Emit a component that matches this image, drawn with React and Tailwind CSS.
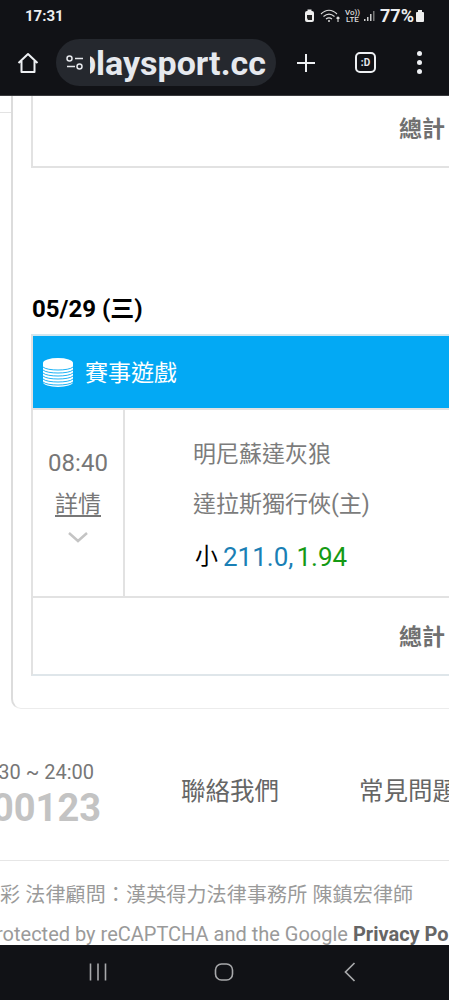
const F = { fontFamily: 'Roboto, "Noto Sans CJK TC", sans-serif' };

function Total() {
  return (
    <div className="flex justify-end items-center pr-[4px] text-[23px] font-bold text-[#707070] leading-none">
      總計
    </div>
  );
}

function Coins() {
  return (
    <svg width="32" height="32" viewBox="0 0 32 32" className="shrink-0">
      <ellipse cx="16" cy="7" rx="15" ry="5" fill="#fff" />
      <rect x="1" y="7" width="30" height="19" fill="#fff" />
      <ellipse cx="16" cy="26" rx="15" ry="5" fill="#fff" />
      {[12, 15, 18, 21, 24, 27].map((y) => (
        <path key={y} d={`M1 ${y - 1}C5 ${y + 3} 27 ${y + 3} 31 ${y - 1}`} fill="none" stroke="#03a9f4" strokeWidth="0.9" />
      ))}
    </svg>
  );
}

function StatusBar() {
  return (
    <div className="h-[32px] shrink-0 flex items-center justify-between pl-[25px] pr-[24px] text-[#eceef0]">
      <span className="text-[15px] font-bold leading-none">17:31</span>
      <div className="flex items-center gap-[3px]">
        <svg width="11" height="14" viewBox="0 0 11 14">
          <rect x="1" y="2" width="9" height="11" rx="2" fill="#eee" />
          <rect x="3.5" y="0.5" width="4" height="2" fill="#eee" />
          <path d="M3 6h5v5H4L3 9z" fill="#222" />
        </svg>
        <svg width="22" height="14" viewBox="0 0 22 14" fill="none" stroke="#ddd" strokeWidth="1.1" className="ml-[2px]">
          <path d="M1 5c5-5 11-5 16 0M3.5 7.5c3.5-3 7.500-3 11 0M6 10c2-1.500 4-1.500 6 0" />
          <path d="M18 13V8M16.500 9.500 18 8l1.500 1.500" />
          <circle cx="9" cy="12" r="1" fill="#ddd" stroke="none" />
        </svg>
        <div className="flex flex-col items-center text-[8px] leading-[7px] text-[#ddd] font-medium">
          <span>Vo))</span>
          <span>LTE</span>
        </div>
        <svg width="14" height="12" viewBox="0 0 14 12">
          <rect x="1" y="9" width="1.500" height="2" fill="#ccc" />
          <rect x="4" y="7" width="1.500" height="4" fill="#ccc" />
          <rect x="7" y="4" width="1.500" height="7" fill="#ccc" />
          <rect x="10" y="1" width="1.500" height="10" fill="#777" />
        </svg>
        <span className="text-[18px] font-bold leading-none">77%</span>
        <svg width="10" height="13" viewBox="0 0 10 13" className="-ml-[2px]">
          <rect x="3" y="0" width="4" height="2" fill="#eee" />
          <rect x="1" y="2" width="8" height="10" rx="1" fill="#eee" />
        </svg>
      </div>
    </div>
  );
}

function Toolbar() {
  return (
    <div className="h-[64px] shrink-0 flex items-center pb-[2px] border-b border-[#3a3b3e] text-[#e6e9ee]">
      <svg width="24" height="24" viewBox="0 0 24 24" fill="none" stroke="#eef0f3" strokeWidth="2" strokeLinejoin="round" className="ml-[16px] shrink-0">
        <path d="M2.500 12 12 3l9.500 9M5.500 10v11h13V10" />
      </svg>
      <div className="ml-[16px] w-[220px] h-[47px] rounded-full bg-[#25282e] flex items-center overflow-hidden shrink-0">
        <svg width="20" height="18" viewBox="0 0 20 18" fill="none" stroke="#e6e8ec" strokeWidth="1.500" className="ml-[9px] shrink-0">
          <circle cx="4.500" cy="4.500" r="2.500" />
          <path d="M10 4.500h8M2 12.500h8" />
          <circle cx="14.500" cy="12.500" r="2.500" />
        </svg>
        <div className="ml-[5px] w-[6px] h-[47px] overflow-hidden shrink-0 relative">
          <span className="absolute right-0 top-0 leading-[47px] text-[34px] font-bold whitespace-nowrap">p</span>
        </div>
        <span className="text-[34px] font-bold leading-none whitespace-nowrap pr-[6px]">laysport.cc</span>
      </div>
      <svg width="24" height="24" viewBox="0 0 24 24" fill="none" stroke="#eef0f3" strokeWidth="2" className="ml-[18px] shrink-0">
        <path d="M12 3v18M3 12h18" />
      </svg>
      <div className="ml-[37px] w-[21px] h-[21px] rounded-[5px] border-2 border-[#eef0f3] flex items-center justify-center text-[10px] font-bold leading-none shrink-0">
        :D
      </div>
      <div className="ml-[41px] flex flex-col gap-[4px] shrink-0">
        <span className="w-[5px] h-[5px] rounded-full bg-[#eef0f3]" />
        <span className="w-[5px] h-[5px] rounded-full bg-[#eef0f3]" />
        <span className="w-[5px] h-[5px] rounded-full bg-[#eef0f3]" />
      </div>
    </div>
  );
}

function Main() {
  return (
    <div className="flex-1 min-h-0 overflow-hidden bg-white relative">
      <div className="absolute left-0 top-[16px] w-[11px] h-px bg-[#e3e3e3]" />
      <div className="ml-[11px] w-[600px] h-[613px] border-l-2 border-b border-[#dcdcdc] border-b-[#ececec] rounded-bl-[10px] pl-[18px] flex flex-col">
        <div className="h-[72px] w-[582px] border-l-2 border-b-2 border-[#e2e2e2] flex flex-col justify-start pt-[22px] shrink-0">
          <div className="w-[416px]"><Total /></div>
        </div>
        <div className="mt-[127px] h-[28px] text-[24px] font-bold leading-[28px] text-black ml-[1px]">05/29 (三)</div>
        <div className="mt-[11px] w-[582px] border-2 border-r-0 border-[#dfe6ea] border-l-[#e2e2e2] border-t-[#cfe6f0]">
          <div className="h-[72px] bg-[#03a9f4] flex items-center pl-[9px] gap-[12px] text-white text-[23px] leading-none">
            <Coins />
            <span className="mt-[2px] -ml-[1px]">賽事遊戲</span>
          </div>
          <div className="flex h-[190px] border-t-2 border-b-2 border-[#e2e2e2]">
            <div className="w-[92px] shrink-0 border-r-2 border-[#e2e2e2] flex flex-col items-center pt-[39px] text-[#777]">
              <span className="text-[24px] leading-[28px]">08:40</span>
              <span className="mt-[15px] text-[23px] leading-[26px] underline underline-offset-[3px]">詳情</span>
              <svg width="22" height="14" viewBox="0 0 22 14" fill="none" stroke="#c4c4c4" strokeWidth="2.500" className="mt-[12px]">
                <path d="M2 3l9 8 9-8" />
              </svg>
            </div>
            <div className="pl-[68px] pt-[32px] text-[#7c7c7c] text-[23px] leading-[26px]">
              <div>明尼蘇達灰狼</div>
              <div className="mt-[24px]">達拉斯獨行俠(主)</div>
              <div className="mt-[24px] text-[26px] leading-[30px] flex items-center pl-[2px]">
                <span className="text-black text-[23px]">小</span>
                <span className="text-[#1a7fb5] ml-[5px]">211.0,</span>
                <span className="text-[#159a14] ml-[3px]">1.94</span>
              </div>
            </div>
          </div>
          <div className="h-[76px] pt-[28px] w-[416px]"><Total /></div>
        </div>
      </div>
      <div className="flex items-start h-[152px] border-b border-[#e6e6e6] w-[449px] shrink-0">
        <div className="w-[101px] shrink-0 flex flex-col mt-[51px] relative h-[70px]">
          <span className="absolute right-[7px] top-0 text-[20px] leading-[24px] text-[#777] whitespace-nowrap">30 ~ 24:00</span>
          <span className="absolute right-0 top-[26px] text-[38px] font-bold leading-[44px] text-[#c3c3c3] whitespace-nowrap">00123</span>
        </div>
        <span className="ml-[80px] mt-[67px] text-[24.500px] leading-[32px] text-[#666] whitespace-nowrap">聯絡我們</span>
        <span className="ml-[80px] mt-[67px] text-[24.500px] leading-[32px] text-[#666] whitespace-nowrap">常見問題</span>
      </div>
      <div className="h-[84px] text-[#9a9a9a] text-[20px] overflow-hidden whitespace-nowrap">
        <div className="mt-[21px] leading-[26px] tracking-[0.15px]">彩 法律顧問：漢英得力法律事務所 陳鎮宏律師</div>
        <div className="mt-[13px] leading-[26px] -ml-[4px]">
          rotected by reCAPTCHA and the Google <b className="text-[#666]">Privacy Policy</b>
        </div>
      </div>
    </div>
  );
}

function NavBar() {
  return (
    <div className="h-[55px] shrink-0 bg-[#111216] flex items-center pb-[2px]">
      <svg width="20" height="20" viewBox="0 0 20 20" stroke="#a8a9ab" strokeWidth="1.600" className="ml-[88px]">
        <path d="M2.500 1.500v17M10 1.500v17M17.500 1.500v17" />
      </svg>
      <svg width="20" height="20" viewBox="0 0 20 20" fill="none" stroke="#a8a9ab" strokeWidth="1.600" className="ml-[106px]">
        <rect x="1.500" y="2" width="17" height="16" rx="6" />
      </svg>
      <svg width="14" height="20" viewBox="0 0 14 20" fill="none" stroke="#a8a9ab" strokeWidth="1.700" className="ml-[109px]">
        <path d="M11.500 1 2.500 10l9 9" />
      </svg>
    </div>
  );
}

export default function App() {
  return (
    <div className="w-[449px] h-[1000px] overflow-hidden flex flex-col bg-[#111216]" style={F}>
      <StatusBar />
      <Toolbar />
      <Main />
      <NavBar />
    </div>
  );
}
